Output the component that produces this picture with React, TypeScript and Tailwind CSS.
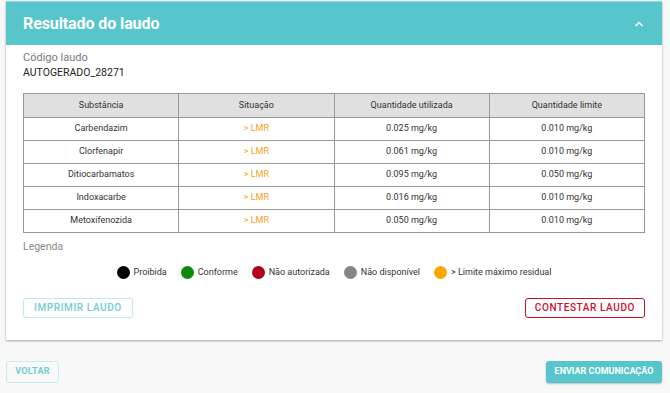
import React from "react";

const ROWS = [
  { name: "Carbendazim", used: "0.025 mg/kg", limit: "0.010 mg/kg" },
  { name: "Clorfenapir", used: "0.061 mg/kg", limit: "0.010 mg/kg" },
  { name: "Ditiocarbamatos", used: "0.095 mg/kg", limit: "0.050 mg/kg" },
  { name: "Indoxacarbe", used: "0.016 mg/kg", limit: "0.010 mg/kg" },
  { name: "Metoxifenozida", used: "0.050 mg/kg", limit: "0.010 mg/kg" },
];

const LEGEND = [
  { label: "Proibida", color: "bg-[#000000]" },
  { label: "Conforme", color: "bg-[#0b8a0b]" },
  { label: "Não autorizada", color: "bg-[#b0001e]" },
  { label: "Não disponível", color: "bg-[#888484]" },
  { label: "> Limite máximo residual", color: "bg-[#ffa500]" },
];

export default function App() {
  return (
    <div className="w-[670px] h-[393px] bg-[#f8f8f8] font-['Roboto',sans-serif] overflow-hidden">
      <div className="pt-px pl-[6px] pr-[8px]">
        <div className="w-[656px] bg-white shadow-[0_1px_2px_rgba(0,0,0,0.35)] border-t border-[#8fdbe0]">
          <div className="h-[43px] bg-[#56c5cc] flex items-center justify-between pl-[17px] pr-[18px]">
            <span className="text-white font-bold text-[16px] tracking-[-0.1px]">Resultado do laudo</span>
            <svg width="10" height="6" viewBox="0 0 10 6" className="mt-px">
              <path d="M1.5 5 L5 1.6 L8.5 5" fill="none" stroke="white" strokeWidth="1.5" />
            </svg>
          </div>
          <div className="px-[17px] pt-[6px] pb-[22px]">
            <div className="text-[11px] text-[#777] leading-[14px]">Código laudo</div>
            <div className="text-[10.5px] text-[#222] leading-[14px] mt-[1px]">AUTOGERADO_28271</div>
            <table className="mt-[13px] w-[622px] border-collapse table-fixed text-[9px] text-[#333]">
              <thead>
                <tr className="bg-[#e0e0e0] h-[24px]">
                  <th className="font-normal border border-[#999]">Substância</th>
                  <th className="font-normal border border-[#999]">Situação</th>
                  <th className="font-normal border border-[#999]">Quantidade utilizada</th>
                  <th className="font-normal border border-[#999]">Quantidade limite</th>
                </tr>
              </thead>
              <tbody>
                {ROWS.map((r) => (
                  <tr key={r.name} className="h-[23px]">
                    <td className="text-center border border-[#999]">{r.name}</td>
                    <td className="text-center border border-[#999] text-[#f7a21b]">&gt; LMR</td>
                    <td className="text-center border border-[#999]">{r.used}</td>
                    <td className="text-center border border-[#999]">{r.limit}</td>
                  </tr>
                ))}
              </tbody>
            </table>
            <div className="text-[10.5px] text-[#888] mt-[7px] leading-[14px]">Legenda</div>
            <div className="flex justify-center items-center gap-[14px] mt-[12px] text-[9px] text-[#333]">
              {LEGEND.map((l) => (
                <div key={l.label} className="flex items-center gap-[4px]">
                  <span className={`w-[13px] h-[13px] rounded-full ${l.color}`} />
                  <span>{l.label}</span>
                </div>
              ))}
            </div>
            <div className="flex justify-between mt-[18px]">
              <button className="h-[20px] px-[10px] border border-[#bfeaed] rounded-[3px] text-[#6fcdd3] text-[10px] font-medium tracking-[0.6px]">
                IMPRIMIR LAUDO
              </button>
              <button className="h-[20px] px-[9px] border border-[#c8102e] rounded-[3px] text-[#c8102e] text-[10px] font-medium tracking-[0.6px]">
                CONTESTAR LAUDO
              </button>
            </div>
          </div>
        </div>
        <div className="flex justify-between mt-[21px]">
          <button className="h-[22px] w-[53px] border border-[#c5ecef] rounded-[3px] text-[#6fcdd3] text-[9px] font-bold tracking-[0.3px]">
            VOLTAR
          </button>
          <button className="h-[22px] w-[116px] bg-[#56c5cc] rounded-[3px] text-white text-[9px] font-bold shadow-[0_1px_2px_rgba(0,0,0,0.25)]">
            ENVIAR COMUNICAÇÃO
          </button>
        </div>
      </div>
    </div>
  );
}
